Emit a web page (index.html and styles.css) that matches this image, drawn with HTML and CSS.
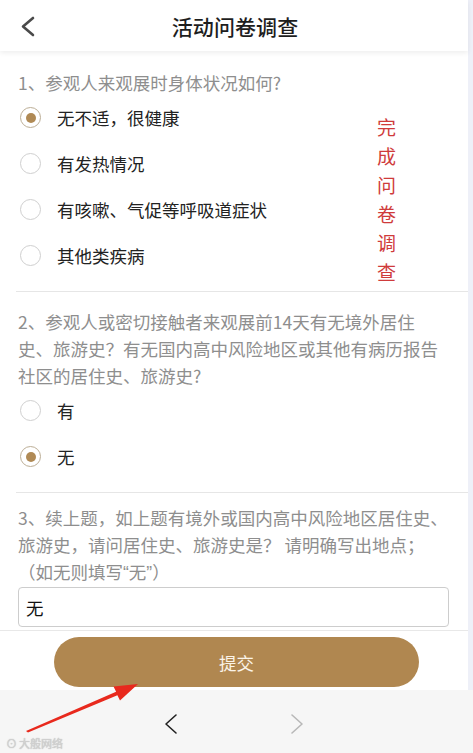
FILE: index.html
```html
<!DOCTYPE html>
<html lang="zh-CN">
<head>
<meta charset="utf-8">
<title>活动问卷调查</title>
<link rel="stylesheet" href="styles.css">
</head>
<body>
<div class="app">
  <div class="upper">
    <div class="main">
      <header class="topbar">
        <svg class="back" width="40" height="53" viewBox="0 0 40 53"><path d="M33 18 L23 26.5 L33 35" fill="none" stroke="#4a4a4a" stroke-width="2.6" stroke-linecap="round" stroke-linejoin="round"/></svg>
        <h1 class="title">活动问卷调查</h1>
      </header>
      <div class="content">
        <section class="q q1">
          <p class="q-text">1、参观人来观展时身体状况如何?</p>
          <ul class="opts">
            <li class="opt"><span class="radio checked"></span><span>无不适，很健康</span></li>
            <li class="opt"><span class="radio"></span><span>有发热情况</span></li>
            <li class="opt"><span class="radio"></span><span>有咳嗽、气促等呼吸道症状</span></li>
            <li class="opt"><span class="radio"></span><span>其他类疾病</span></li>
          </ul>
        </section>
        <section class="q">
          <p class="q-text">2、参观人或密切接触者来观展前14天有无境外居住史、旅游史？有无国内高中风险地区或其他有病历报告社区的居住史、旅游史?</p>
          <ul class="opts">
            <li class="opt"><span class="radio"></span><span>有</span></li>
            <li class="opt"><span class="radio checked"></span><span>无</span></li>
          </ul>
        </section>
        <section class="q q3">
          <p class="q-text nowrap">3、续上题，如上题有境外或国内高中风险地区居住史、<br>旅游史，请问居住史、旅游史是？ 请明确写出地点；<br>（如无则填写<span class="lq">“</span>无<span class="lq">”</span>）</p>
          <div class="input">无</div>
        </section>
      </div>
      <div class="submit-wrap">
        <button class="submit">提交</button>
      </div>
    </div>
    <div class="edge"></div>
  </div>
  <nav class="browser-bar">
    <svg width="14" height="22" viewBox="0 0 14 22"><path d="M12 2 L2 11 L12 20" fill="none" stroke="#222" stroke-width="1.6" stroke-linecap="round" stroke-linejoin="round"/></svg>
    <svg width="14" height="22" viewBox="0 0 14 22"><path d="M2 2 L12 11 L2 20" fill="none" stroke="#b8b8b8" stroke-width="1.6" stroke-linecap="round" stroke-linejoin="round"/></svg>
  </nav>
</div>
<div class="note">完成问卷调查</div>
<svg class="arrow" width="473" height="753" viewBox="0 0 473 753">
  <polygon points="26,731 116.1,691.8 113.5,686.5 138,684 120,700.5 117.4,695.2 28,732.5" fill="#e8291d"/>
</svg>
<div class="watermark"><span class="wb">⊙</span>大般网络</div>
</body>
</html>
```
FILE: styles.css
```css
* { box-sizing: border-box; }
html, body { margin: 0; padding: 0; }
body {
  width: 473px;
  height: 753px;
  overflow: hidden;
  position: relative;
  font-family: "Noto Sans CJK SC", "Noto Sans", sans-serif;
  background: #fff;
  color: #222;
}
.app { display: flex; flex-direction: column; height: 753px; }
.upper { display: flex; height: 690px; }
.main { flex: 1; display: flex; flex-direction: column; min-width: 0; }
.edge { width: 5px; background: #eef0f8; }

.topbar {
  height: 53px;
  display: flex;
  align-items: center;
  justify-content: center;
  position: relative;
  background: #fff;
  box-shadow: 0 2px 5px rgba(0,0,0,0.07);
  z-index: 1;
}
.back { position: absolute; left: 0; top: 0; }
.title {
  margin: 0 0 0 2px;
  font-size: 21px;
  font-weight: 500;
  color: #1e1e1e;
  letter-spacing: 0.1px;
}

.content { flex: 1; padding-left: 16px; }
.q { padding: 16px 0 14px 2px; border-bottom: 1px solid #e6e6e6; }
.q1 { padding-top: 18px; }
.q3 { padding: 11px 19px 3px 2px; border-bottom: none; }
.q-text {
  margin: 0;
  font-size: 17.5px;
  line-height: 27px;
  color: #8e8e8e;
  padding-right: 20px;
}
.q-text.nowrap { white-space: nowrap; padding-right: 0; }
.lq { font-family: "Liberation Sans", sans-serif; }
.opts { list-style: none; margin: 0; padding: 0; display: flex; flex-direction: column; gap: 3px; }
.opt {
  height: 43px;
  display: flex;
  align-items: center;
  font-size: 17.5px;
  color: #222;
}
.radio {
  width: 21px;
  height: 21px;
  border-radius: 50%;
  border: 1px solid #cfcfcf;
  margin: 0 16px 0 2px;
  flex: none;
  display: flex;
  align-items: center;
  justify-content: center;
}
.radio.checked { border: 1.5px solid #bcae96; }
.radio.checked::after {
  content: "";
  width: 10px;
  height: 10px;
  border-radius: 50%;
  background: #b08a55;
}
.input {
  height: 40px;
  border: 1px solid #cdcdcd;
  border-radius: 4px;
  padding-left: 7px;
  display: flex;
  align-items: center;
  font-size: 17.5px;
  color: #111;
}

.submit-wrap {
  border-top: 1px solid #e8e8e8;
  padding: 6px 0 3px;
  display: flex;
  justify-content: center;
}
.submit {
  width: 365px;
  height: 50px;
  margin-left: 5px;
  border: none;
  border-radius: 25px;
  background: #b08750;
  color: #fbf4e8;
  font-family: inherit;
  font-size: 17.5px;
}

.browser-bar {
  flex: 1;
  background: #f6f6f6;
  display: flex;
  justify-content: center;
  align-items: center;
  gap: 112px;
  padding-top: 4px;
  padding-right: 5px;
}

.note {
  position: absolute;
  left: 377px;
  top: 112px;
  width: 20px;
  font-size: 19px;
  line-height: 29px;
  color: #cf3b3b;
  word-break: break-all;
}
.arrow { position: absolute; left: 0; top: 0; pointer-events: none; }
.watermark {
  position: absolute;
  left: 6px;
  top: 736px;
  font-size: 11px;
  line-height: 14px;
  color: #d2d2d2;
  text-shadow: 0 0 1px #aaa;
}
.wb { margin-right: 2px; }
```
